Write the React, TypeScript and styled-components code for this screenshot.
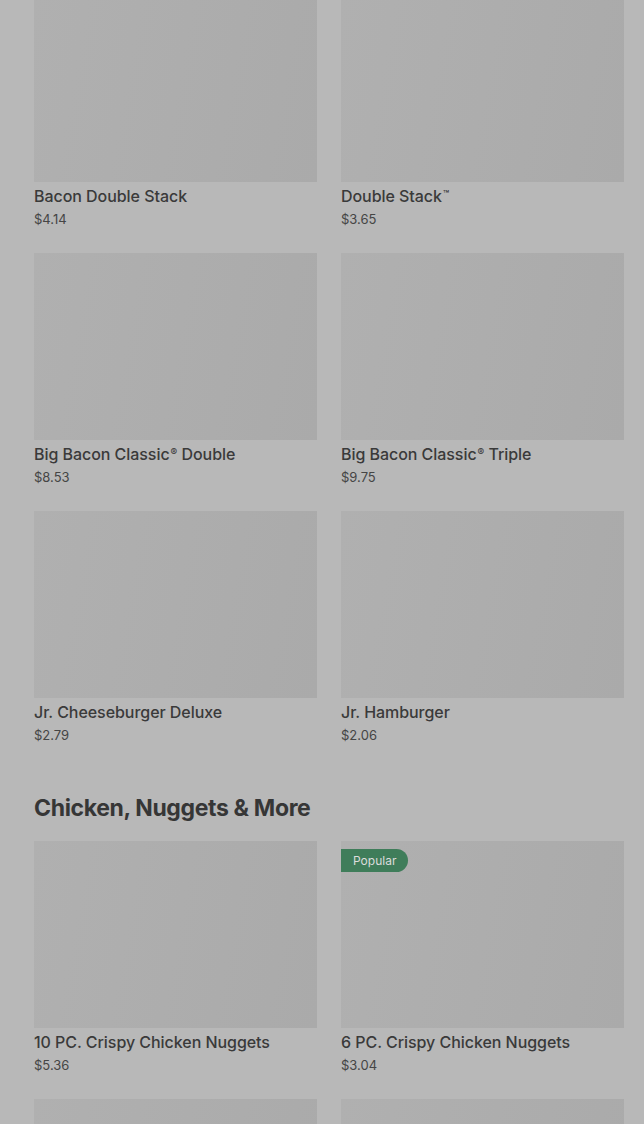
import React from "react";
import styled, { createGlobalStyle } from "styled-components";

const Global = createGlobalStyle`
  html, body { margin: 0; padding: 0; background: #b8b8b8; overflow: hidden; }
  body { font-family: Inter, "Noto Sans", sans-serif; }
`;

const Page = styled.main`
  margin-top: -5px;
  padding: 0 20px 0 34px;
  display: flex;
  flex-direction: column;
  gap: 48px;
`;

const Section = styled.section`
  display: flex;
  flex-direction: column;
`;

const Heading = styled.h2`
  margin: 0 0 17px;
  font-size: 23px;
  line-height: 32px;
  font-weight: 700;
  letter-spacing: -0.35px;
  color: #363636;
`;

const Grid = styled.div`
  display: grid;
  grid-template-columns: 283px 283px;
  column-gap: 24px;
  row-gap: 25px;
`;

const Card = styled.article`
  display: flex;
  flex-direction: column;
`;

const Thumb = styled.div`
  position: relative;
  height: 187px;
  background: linear-gradient(100deg, #b0b0b0 0%, #adadad 50%, #aaaaaa 100%);
`;

const Badge = styled.span`
  position: absolute;
  top: 8px;
  left: 0;
  height: 23px;
  padding: 0 12px;
  display: flex;
  align-items: center;
  background: #3f7d5a;
  color: #dcdcdc;
  font-size: 12px;
  border-radius: 0 12px 12px 0;
`;

const Title = styled.div`
  margin-top: 4px;
  height: 20px;
  font-size: 16px;
  line-height: 20px;
  font-weight: 500;
  letter-spacing: -0.05px;
  color: #3a3a3a;
  white-space: nowrap;
`;

const Mark = styled.span`
  font-size: 10px;
  line-height: 0;
  position: relative;
  top: -4px;
  margin-left: 1px;
`;

const Price = styled.div`
  margin-top: 4px;
  font-size: 13px;
  line-height: 18px;
  color: #454545;
`;

type Item = { name: string; mark?: string; rest?: string; price: string; badge?: string };

const burgers: Item[] = [
  { name: "Bacon Double Stack", price: "$4.14" },
  { name: "Double Stack", mark: "™", price: "$3.65" },
  { name: "Big Bacon Classic", mark: "®", rest: " Double", price: "$8.53" },
  { name: "Big Bacon Classic", mark: "®", rest: " Triple", price: "$9.75" },
  { name: "Jr. Cheeseburger Deluxe", price: "$2.79" },
  { name: "Jr. Hamburger", price: "$2.06" },
];

const chicken: Item[] = [
  { name: "10 PC. Crispy Chicken Nuggets", price: "$5.36" },
  { name: "6 PC. Crispy Chicken Nuggets", price: "$3.04", badge: "Popular" },
  { name: "Spicy Chicken Nuggets", price: "$4.29" },
  { name: "Crispy Chicken Sandwich", price: "$2.99" },
];

const ItemCard = ({ item }: { item: Item }) => (
  <Card>
    <Thumb>{item.badge && <Badge>{item.badge}</Badge>}</Thumb>
    <Title>
      {item.name}
      {item.mark && <Mark>{item.mark}</Mark>}
      {item.rest}
    </Title>
    <Price>{item.price}</Price>
  </Card>
);

export default function App() {
  return (
    <>
      <Global />
      <Page>
        <Section>
          <Grid>
            {burgers.map((b, i) => (
              <ItemCard key={i} item={b} />
            ))}
          </Grid>
        </Section>
        <Section>
          <Heading>Chicken, Nuggets &amp; More</Heading>
          <Grid>
            {chicken.map((b, i) => (
              <ItemCard key={i} item={b} />
            ))}
          </Grid>
        </Section>
      </Page>
    </>
  );
}
